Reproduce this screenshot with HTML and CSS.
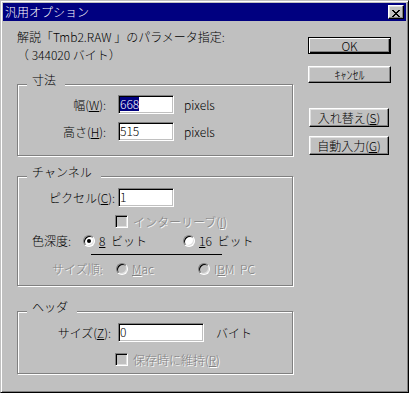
FILE: index.html
```html
<!DOCTYPE html>
<html lang="ja">
<head>
<meta charset="utf-8">
<title>汎用オプション</title>
<link rel="stylesheet" href="styles.css">
</head>
<body>
<div class="window">
  <div class="titlebar">
    <span class="title">汎用オプション</span>
    <button class="close" type="button" aria-label="閉じる">
      <svg width="8" height="7" viewBox="0 0 8 7" shape-rendering="crispEdges"><path fill="#000" d="M0 0h2v1H0zM6 0h2v1H6zM1 1h2v1H1zM5 1h2v1H5zM2 2h4v1H2zM3 3h2v1H3zM2 4h4v1H2zM1 5h2v1H1zM5 5h2v1H5zM0 6h2v1H0zM6 6h2v1H6z"/></svg>
    </button>
  </div>
  <div class="content">
    <div class="main">
      <p class="intro">解説「Tmb2.RAW 」のパラメータ指定:<br>（ 344020 バイト）</p>

      <section class="group g-size">
        <span class="legend">寸法</span>
        <div class="row r-first">
          <span class="label lbl-size">幅(<u>W</u>):</span>
          <div class="field w56"><span class="val sel">668</span></div>
          <span class="unit">pixels</span>
        </div>
        <div class="row r-second">
          <span class="label lbl-size">高さ(<u>H</u>):</span>
          <div class="field w56"><span class="val">515</span></div>
          <span class="unit">pixels</span>
        </div>
      </section>

      <section class="group g-channel">
        <span class="legend">チャンネル</span>
        <div class="row r-pix">
          <span class="label lbl-pix">ピクセル(<u>C</u>):</span>
          <div class="field w56"><span class="val">1</span></div>
        </div>
        <div class="row r-check">
          <span class="checkbox disabled"></span>
          <span class="opt-text disabled-text">インターリーブ(<u>I</u>)</span>
        </div>
        <div class="row r-depth">
          <span class="row-label lbl-depth">色深度:</span>
          <span class="option opt-8"><span class="radio checked"></span><span class="opt-text"><u>8</u> ビット</span></span>
          <span class="option"><span class="radio"></span><span class="opt-text"><u>1</u>6 ビット</span></span>
        </div>
        <div class="divider"></div>
        <div class="row r-order">
          <span class="row-label lbl-order disabled-text">サイズ順:</span>
          <span class="option opt-mac"><span class="radio disabled"></span><span class="opt-text disabled-text"><u>M</u>ac</span></span>
          <span class="option"><span class="radio disabled"></span><span class="opt-text disabled-text">I<u>B</u>M PC</span></span>
        </div>
      </section>

      <section class="group g-header">
        <span class="legend">ヘッダ</span>
        <div class="row r-hsize">
          <span class="label lbl-hsize">サイズ(<u>Z</u>):</span>
          <div class="field w86"><span class="val">0</span></div>
          <span class="unit unit-byte">バイト</span>
        </div>
        <div class="row r-keep">
          <span class="checkbox disabled"></span>
          <span class="opt-text disabled-text">保存時に維持(<u>R</u>)</span>
        </div>
      </section>
    </div>

    <div class="side">
      <button class="btn btn-default" type="button">OK</button>
      <button class="btn btn-cancel" type="button">ｷｬﾝｾﾙ</button>
      <button class="btn btn-swap" type="button">入れ替え(<u>S</u>)</button>
      <button class="btn btn-auto" type="button">自動入力(<u>G</u>)</button>
    </div>
  </div>
</div>
</body>
</html>
```

FILE: styles.css
```css
* {
  box-sizing: border-box;
}

html, body {
  margin: 0;
  padding: 0;
  background: #c0c0c0;
}

body {
  font-family: "Noto Sans CJK JP", "Noto Sans", sans-serif;
  font-size: 12px;
  font-weight: 300;
  color: #000;
}

u {
  text-decoration: underline;
  text-underline-offset: 1px;
}

.window {
  width: 409px;
  height: 393px;
  background: #c0c0c0;
  border: 1px solid;
  border-color: #c0c0c0 #000 #000 #c0c0c0;
  box-shadow: inset 1px 1px #fff, inset -1px -1px #808080;
  padding: 2px;
  display: flex;
  flex-direction: column;
}

.titlebar {
  height: 18px;
  flex: none;
  background: #000080;
  color: #fff;
  display: flex;
  align-items: center;
  justify-content: space-between;
  padding: 0 2px;
  line-height: 18px;
}

.close {
  width: 16px;
  height: 14px;
  margin: 0;
  padding: 3px 0 0 3px;
  border: 1px solid;
  border-color: #fff #000 #000 #fff;
  box-shadow: inset -1px -1px #808080, inset 1px 1px #dfdfdf;
  background: #c0c0c0;
  display: block;
  line-height: 0;
}

.close svg {
  display: block;
}

.content {
  flex: 1;
  display: flex;
  padding: 7px 0 0 14px;
}

.main {
  width: 276px;
  flex: none;
}

.intro {
  margin: 0;
  line-height: 18px;
}

.group {
  border: 1px solid #808080;
  box-shadow: inset 1px 1px #fff, 1px 1px #fff;
}

.legend {
  display: block;
  width: max-content;
  margin: -14px 0 0 9px;
  padding: 0 9px 0 5px;
  line-height: 18px;
  background: #c0c0c0;
}

.row {
  display: flex;
  align-items: center;
  line-height: 18px;
}

.label {
  flex: none;
  text-align: right;
  white-space: nowrap;
}

.field {
  flex: none;
  height: 19px;
  background: #fff;
  border: 1px solid;
  border-color: #808080 #fff #fff #808080;
  box-shadow: inset 1px 1px #000, inset -1px -1px #c0c0c0;
  padding: 1px 0 0 1px;
  display: flex;
  align-items: flex-start;
}

.w56 { width: 56px; }
.w86 { width: 86px; }

.val {
  display: inline-block;
  height: 14px;
  line-height: 14px;
}

.sel {
  background: #000080;
  color: #fff;
}

.unit {
  margin-left: 10px;
}

.unit-byte {
  margin-left: 12px;
}

.checkbox {
  flex: none;
  width: 13px;
  height: 13px;
  border: 1px solid;
  border-color: #808080 #fff #fff #808080;
  box-shadow: inset 1px 1px #000, inset -1px -1px #dfdfdf;
  background: #fff;
}

.checkbox.disabled {
  background: #c0c0c0;
}

.radio {
  flex: none;
  width: 12px;
  height: 12px;
  border-radius: 50%;
  border: 1px solid;
  border-color: #808080 #fff #fff #808080;
  box-shadow: inset 1px 1px #000, inset -1px -1px #dfdfdf;
  background: #fff;
  display: flex;
  align-items: center;
  justify-content: center;
}

.radio.checked::after {
  content: "";
  width: 4px;
  height: 4px;
  border-radius: 50%;
  background: #000;
}

.radio.disabled {
  background: #c0c0c0;
}

.disabled-text {
  color: #808080;
  text-shadow: 1px 1px 0 #fff;
}

.option {
  flex: none;
  display: flex;
  align-items: center;
  gap: 4px;
}

.opt-text {
  white-space: nowrap;
  word-spacing: 3px;
}

.row-label {
  flex: none;
  white-space: nowrap;
}

/* 寸法 */
.g-size {
  margin-top: 20px;
  padding-bottom: 14px;
}

.g-size .row { height: 19px; }
.r-first { margin-top: 6px; }
.r-second { margin-top: 8px; }

.lbl-size {
  width: 88px;
  margin-right: 12px;
}

/* チャンネル */
.g-channel {
  margin-top: 20px;
  padding-bottom: 10px;
}

.r-pix {
  margin-top: 7px;
  height: 19px;
}

.lbl-pix {
  width: 97px;
  margin-right: 3px;
}

.r-check {
  margin-top: 8px;
  height: 13px;
  padding-left: 97px;
  gap: 5px;
}

.r-depth {
  margin-top: 7px;
  height: 12px;
}

.lbl-depth {
  margin-left: 14px;
  width: 51px;
}

.opt-8 {
  width: 100px;
}

.divider {
  margin: 7px 0 0 73px;
  width: 131px;
  height: 1px;
  background: #000;
}

.r-order {
  margin-top: 8px;
  height: 12px;
}

.lbl-order {
  margin-left: 34px;
  width: 64px;
}

.opt-mac {
  width: 82px;
}

/* ヘッダ */
.g-header {
  margin-top: 25px;
  padding-bottom: 7px;
}

.r-hsize {
  margin-top: 7px;
  height: 19px;
}

.lbl-hsize {
  width: 93px;
  margin-right: 7px;
}

.r-keep {
  margin-top: 11px;
  height: 13px;
  padding-left: 97px;
  gap: 5px;
}

/* buttons */
.side {
  flex: none;
  margin-left: 15px;
  width: 83px;
  padding-top: 9px;
  display: flex;
  flex-direction: column;
  align-items: flex-start;
}

.btn {
  font: inherit;
  color: #000;
  margin: 0;
  padding: 0;
  width: 83px;
  height: 17px;
  line-height: 15px;
  text-align: center;
  background: #c0c0c0;
  border: 1px solid;
  border-color: #fff #000 #000 #fff;
  box-shadow: inset -1px -1px #808080, inset 1px 1px #dfdfdf;
  white-space: nowrap;
}

.btn-default {
  border-color: #000;
  box-shadow: inset 1px 1px #fff, inset -1px -1px #000, inset -2px -2px #808080;
}

.btn-cancel {
  margin-top: 12px;
}

.btn-swap {
  margin-top: 25px;
  margin-left: 1px;
  width: 80px;
  height: 19px;
  line-height: 17px;
}

.btn-auto {
  margin-top: 9px;
  margin-left: 1px;
  width: 80px;
  height: 19px;
  line-height: 17px;
}
```
